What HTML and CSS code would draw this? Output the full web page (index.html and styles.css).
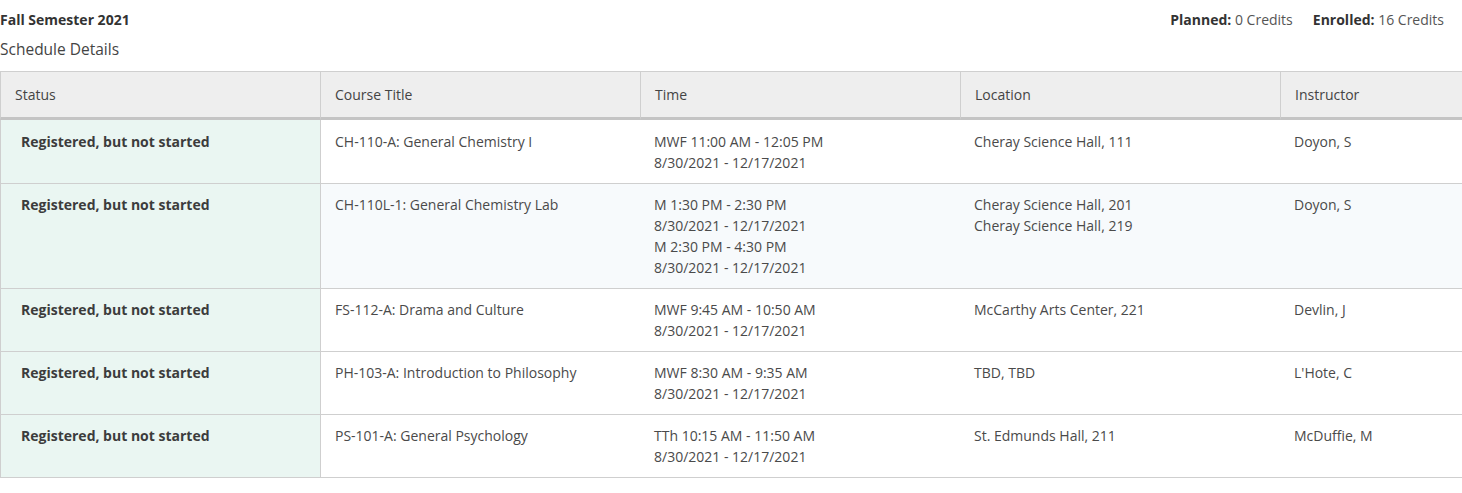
FILE: index.html
```html
<!DOCTYPE html>
<html lang="en">
<head>
<meta charset="utf-8">
<title>Schedule</title>
<link rel="stylesheet" href="styles.css">
</head>
<body>
<div class="page">
  <div class="top">
    <div class="term">Fall Semester 2021</div>
    <div class="credits">
      <span class="credit"><b>Planned:</b> 0 Credits</span>
      <span class="credit"><b>Enrolled:</b> 16 Credits</span>
    </div>
  </div>
  <div class="subtitle">Schedule Details</div>
  <table class="sched">
    <colgroup><col><col><col><col><col></colgroup>
    <thead>
      <tr><th>Status</th><th>Course Title</th><th>Time</th><th>Location</th><th>Instructor</th></tr>
    </thead>
    <tbody>
      <tr class="first">
        <td class="status">Registered, but not started</td>
        <td class="course">CH-110-A: General Chemistry I</td>
        <td>MWF 11:00 AM - 12:05 PM<br>8/30/2021 - 12/17/2021</td>
        <td>Cheray Science Hall, 111</td>
        <td>Doyon, S</td>
      </tr>
      <tr class="alt">
        <td class="status">Registered, but not started</td>
        <td class="course">CH-110L-1: General Chemistry Lab</td>
        <td>M 1:30 PM - 2:30 PM<br>8/30/2021 - 12/17/2021<br>M 2:30 PM - 4:30 PM<br>8/30/2021 - 12/17/2021</td>
        <td>Cheray Science Hall, 201<br>Cheray Science Hall, 219</td>
        <td>Doyon, S</td>
      </tr>
      <tr>
        <td class="status">Registered, but not started</td>
        <td class="course">FS-112-A: Drama and Culture</td>
        <td>MWF 9:45 AM - 10:50 AM<br>8/30/2021 - 12/17/2021</td>
        <td>McCarthy Arts Center, 221</td>
        <td>Devlin, J</td>
      </tr>
      <tr>
        <td class="status">Registered, but not started</td>
        <td class="course">PH-103-A: Introduction to Philosophy</td>
        <td>MWF 8:30 AM - 9:35 AM<br>8/30/2021 - 12/17/2021</td>
        <td>TBD, TBD</td>
        <td>L'Hote, C</td>
      </tr>
      <tr>
        <td class="status">Registered, but not started</td>
        <td class="course">PS-101-A: General Psychology</td>
        <td>TTh 10:15 AM - 11:50 AM<br>8/30/2021 - 12/17/2021</td>
        <td>St. Edmunds Hall, 211</td>
        <td>McDuffie, M</td>
      </tr>
    </tbody>
  </table>
</div>
</body>
</html>
```
FILE: styles.css
```css
html, body {
  margin: 0;
  padding: 0;
  background: #fff;
  overflow: hidden;
}
body {
  font-family: "Open Sans", "Liberation Sans", sans-serif;
  font-size: 14px;
  color: #4a4a4a;
}
.page {
  width: 1600px;
}
.top {
  display: flex;
  justify-content: space-between;
  width: 1444px;
  padding-top: 9px;
  line-height: 21px;
}
.term {
  font-weight: 700;
  font-size: 14px;
  color: #333;
}
.credits {
  display: flex;
  gap: 20px;
  font-size: 14px;
  color: #555;
}
.credits b {
  color: #333;
}
.subtitle {
  font-size: 15.5px;
  line-height: 21px;
  margin-top: 9px;
  color: #444;
}
.sched {
  margin-top: 11px;
  width: 1600px;
  table-layout: fixed;
  border-collapse: separate;
  border-spacing: 0;
}
.sched col {
  width: 320px;
}
.sched th {
  background: #eeeeee;
  font-weight: 400;
  text-align: left;
  line-height: 21px;
  padding: 12px 14px 12px 14px;
  border-top: 1px solid #cfcfcf;
  border-left: 1px solid #cfcfcf;
  border-bottom: 3px solid #c4c4c4;
  color: #444;
}
.sched td {
  vertical-align: top;
  line-height: 21px;
  padding: 10px 14px 10px 14px;
  border-bottom: 1px solid #cfcfcf;
}
.sched tr.first td {
  padding-top: 11px;
}
.sched td.course {
  border-left: 1px solid #cfcfcf;
}
.sched tr.alt td {
  background: #f7fafc;
}
.sched td.status,
.sched tr.alt td.status {
  background: #eaf6f2;
  font-weight: 700;
  padding-left: 20px;
  border-left: 1px solid #cfcfcf;
  color: #3c3c3c;
}
```
